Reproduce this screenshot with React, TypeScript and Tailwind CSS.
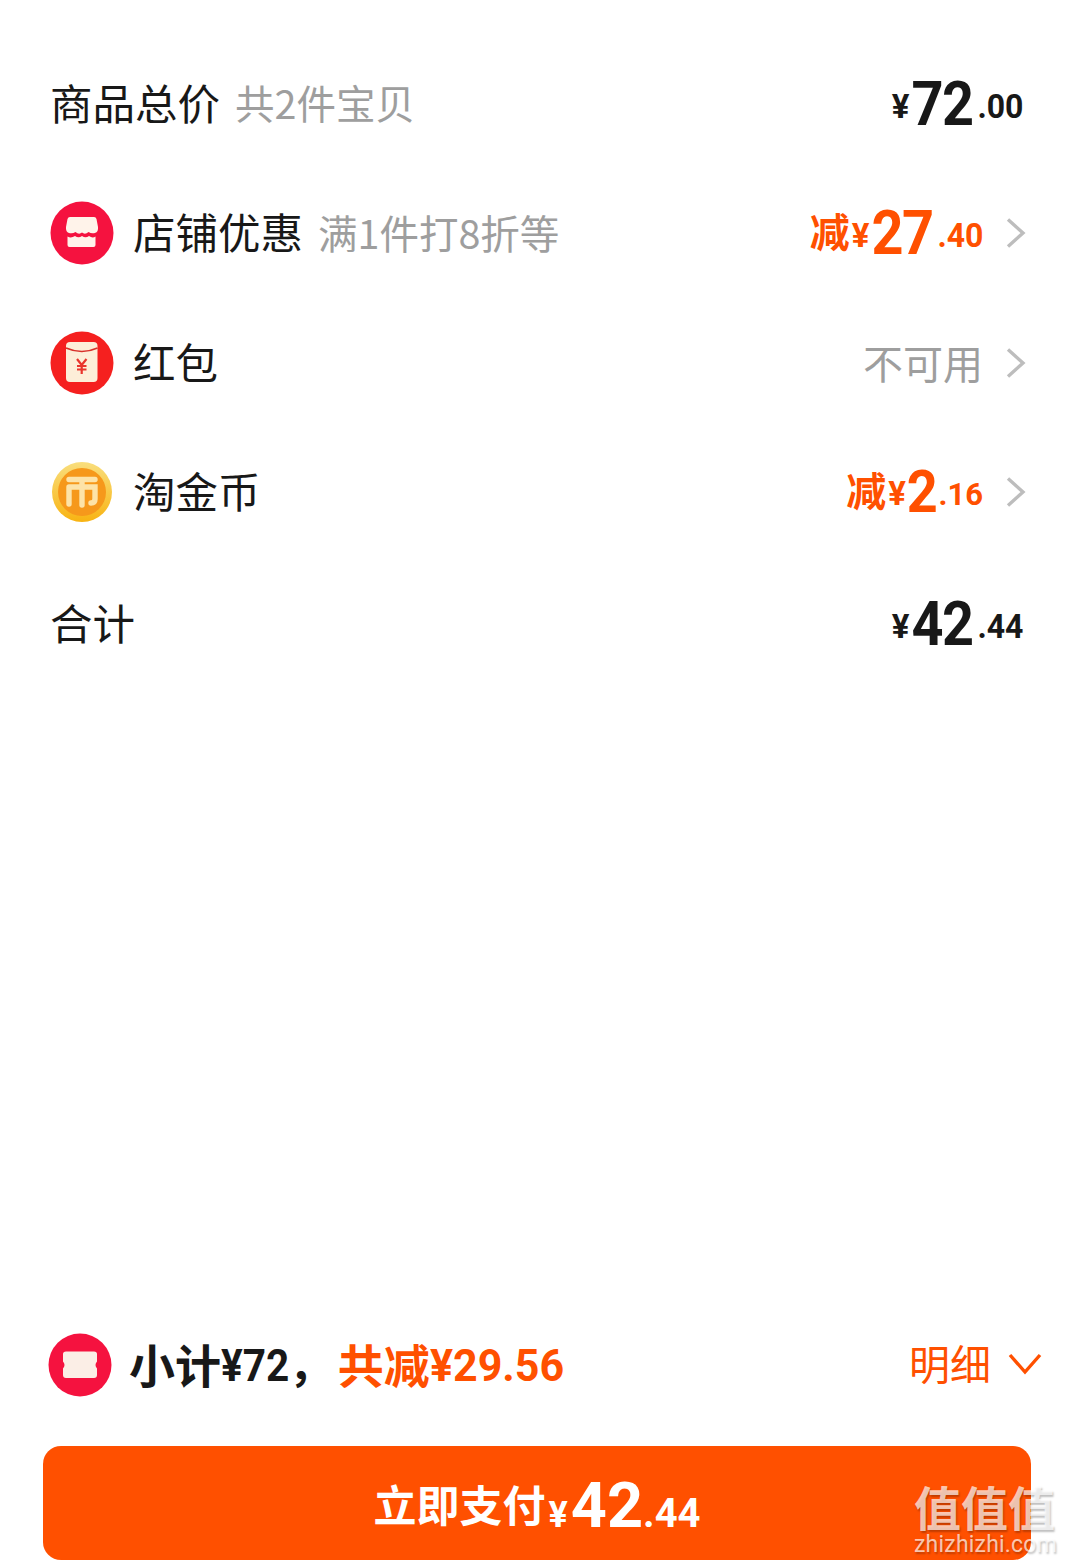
const cjk = "font-['Noto_Sans_CJK_SC','Noto_Sans',sans-serif]";

function Chevron() {
  return (
    <svg width="20" height="32" viewBox="0 0 20 32" fill="none" className="ml-[23px] shrink-0">
      <path d="M2 2.5 L17 16 L2 29.5" stroke="#bdbdbd" strokeWidth="3.4" />
    </svg>
  );
}

function Price({ big, cents, color, bigSize = "text-[62px]", centSize = "text-[33px]" }: { big: string; cents: string; color: string; bigSize?: string; centSize?: string }) {
  return (
    <span className={`flex items-baseline font-['Roboto',sans-serif] leading-none ${color}`}>
      <span className="text-[33px] font-bold mr-[2px] -translate-y-[7px]">¥</span>
      <span className={`${bigSize} font-bold tracking-[-1.5px] scale-x-[0.9] -mx-[3px]`}>{big}</span>
      <span className={`${centSize} font-bold ml-[2px] scale-x-[0.97] origin-right -translate-y-[7px]`}>{cents}</span>
    </span>
  );
}

function StoreIcon() {
  return (
    <svg width="64" height="64" viewBox="0 0 64 64" className="shrink-0">
      <circle cx="32" cy="32" r="31.5" fill="#f5123f" />
      <path d="M20 16 H44 Q46 16 46.5 18 L48 26 Q48.5 31 45 32 Q41.5 33 38.5 31 Q35 34 32 31.5 Q29 34 25.5 31 Q22.5 33 19 32 Q15.5 31 16 26 L17.5 18 Q18 16 20 16 Z" fill="#fff3ea" />
      <path d="M17.5 35.5 Q21 37.5 25 35 Q28.5 37.5 32 35 Q35.5 37.5 39 35 Q42.5 37.5 45.5 35.5 V44 Q45.5 46 43.5 46 H19.5 Q17.5 46 17.5 44 Z" fill="#fff3ea" />
    </svg>
  );
}

function PacketIcon() {
  return (
    <svg width="64" height="64" viewBox="0 0 64 64" className="shrink-0">
      <circle cx="32" cy="32" r="31.5" fill="#f5201f" />
      <rect x="16" y="11" width="31.5" height="40" rx="4" fill="#fdeed8" />
      <path d="M16 17 Q32 24 47.5 17" stroke="#d8302a" strokeWidth="1.6" fill="none" />
      <path d="M27 28 L31.7 34 L36.5 28 M27 35 H36.5 M27 38.5 H36.5 M31.7 34 V43" stroke="#e9342c" strokeWidth="2.2" fill="none" />
    </svg>
  );
}

function CoinIcon() {
  return (
    <svg width="64" height="64" viewBox="0 0 64 64" className="shrink-0">
      <defs>
        <linearGradient id="coinEdge" x1="0" y1="0" x2="0" y2="1">
          <stop offset="0" stopColor="#f9de7d" />
          <stop offset="1" stopColor="#f8b312" />
        </linearGradient>
      </defs>
      <circle cx="32" cy="32" r="30" fill="url(#coinEdge)" />
      <circle cx="32" cy="32" r="24" fill="#f6981b" />
      <path d="M19 19.5 H45 M32 19.5 V45 M19 27 H45 V39 Q45 43 41 43 M19 27 V44" stroke="#fde3a8" strokeWidth="5.4" fill="none" strokeLinecap="round" />
    </svg>
  );
}

function TicketIcon() {
  return (
    <svg width="64" height="64" viewBox="0 0 64 64" className="shrink-0">
      <circle cx="32" cy="32" r="31.5" fill="#f5123f" />
      <path d="M18 18.5 H46 Q49 18.5 49 21 V28.5 Q46 32 49 35.5 V42 Q49 45 46 45 H18 Q15 45 15 42 V35.5 Q18 32 15 28.5 V21 Q15 18.5 18 18.5 Z" fill="#fbeee6" />
    </svg>
  );
}

function Row({ children, right }: { children: React.ReactNode; right: React.ReactNode }) {
  return (
    <div className="h-[129.5px] flex items-center justify-between">
      <div className="flex items-center">{children}</div>
      <div className="flex items-center">{right}</div>
    </div>
  );
}

const label = "text-[42.5px] leading-none -translate-y-[2px]";
const sub = "text-[39.5px] leading-none ml-[15px] text-[#9e9e9e] -translate-y-[2px]";
const minus = "text-[40px] font-bold leading-none text-[#ff5000] mr-[2px] -translate-y-[3px]";

export default function App() {
  return (
    <div className={`relative w-[1066px] h-[1562px] bg-white flex flex-col overflow-hidden ${cjk}`}>
      <div className="pt-[39px] pl-[50px] pr-[40px] text-[#181818]">
        <div className="mr-[3px]">
          <Row right={<Price big="72" cents=".00" color="text-[#181818]" />}>
            <span className={label}>商品总价</span>
            <span className={sub}>共2件宝贝</span>
          </Row>
        </div>
        <Row right={<><span className={minus}>减</span><Price big="27" cents=".40" color="text-[#ff5000]" /><Chevron /></>}>
          <StoreIcon />
          <span className={`${label} ml-[19px]`}>店铺优惠</span>
          <span className={sub}>满1件打8折等</span>
        </Row>
        <Row right={<><span className="text-[40px] leading-none text-[#9e9e9e] -translate-y-[1px]">不可用</span><Chevron /></>}>
          <PacketIcon />
          <span className={`${label} ml-[19px]`}>红包</span>
        </Row>
        <Row right={<><span className={minus}>减</span><Price big="2" cents=".16" color="text-[#ff5000]" bigSize="text-[60px]" centSize="text-[32px]" /><Chevron /></>}>
          <CoinIcon />
          <span className={`${label} ml-[19px]`}>淘金币</span>
        </Row>
        <div className="mr-[3px] pt-[2px]">
          <Row right={<Price big="42" cents=".44" color="text-[#181818]" />}>
            <span className={label}>合计</span>
          </Row>
        </div>
      </div>

      <div className="flex-1" />

      <div className="pl-[48px] pr-[24px] flex items-center justify-between h-[64px]">
        <div className="flex items-center">
          <TicketIcon />
          <span className="ml-[17px] text-[46px] leading-none font-bold text-[#181818] -translate-y-[2px]">小计</span>
          <span className="text-[45px] leading-none font-bold font-['Roboto',sans-serif] text-[#181818] scale-x-[0.9] origin-left -mr-[8px]">¥72</span>
          <span className="text-[44px] leading-none font-bold text-[#181818] w-[49px] -translate-y-[2px]">，</span>
          <span className="text-[46px] leading-none font-bold text-[#ff5000] -translate-y-[2px]">共减</span>
          <span className="text-[45px] leading-none font-bold font-['Roboto',sans-serif] text-[#ff5000] scale-x-[0.955] origin-left -mr-[8px]">¥29.56</span>
        </div>
        <div className="flex items-center">
          <span className="text-[41px] leading-none text-[#ff5000] -translate-y-[3px]">明细</span>
          <svg width="34" height="24" viewBox="0 0 34 24" fill="none" className="ml-[17px] -translate-y-[1px]">
            <path d="M2 3 L17 20 L32 3" stroke="#ff5000" strokeWidth="3.4" />
          </svg>
        </div>
      </div>

      <div className="mt-[49px] mb-[2px] ml-[43px] w-[988px] h-[114px] rounded-[18px] bg-[#ff5000] flex items-center justify-center text-white">
        <span className="text-[43px] leading-none font-bold">立即支付</span>
        <span className="flex items-baseline font-['Roboto',sans-serif] leading-none font-bold translate-y-[2px]">
          <span className="text-[36px] mx-[3px]">¥</span>
          <span className="text-[63px]">42</span>
          <span className="text-[40px] font-bold">.44</span>
        </span>
      </div>

      <div className="absolute left-[914px] top-[1479px] w-[150px] text-white/70 [text-shadow:1px_2px_2px_rgba(0,0,0,0.25)]">
        <div className="text-[47px] leading-[53px] font-bold whitespace-nowrap">值值值</div>
        <div className="text-[23px] leading-[24px] font-['Roboto',sans-serif] tracking-[0.2px] mt-[1px]">zhizhizhi.com</div>
      </div>
    </div>
  );
}
